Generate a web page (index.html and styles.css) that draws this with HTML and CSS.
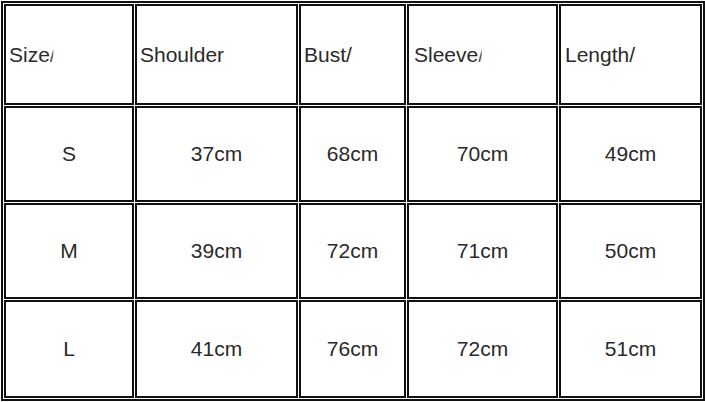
FILE: index.html
```html
<!DOCTYPE html>
<html>
<head>
<meta charset="utf-8">
<link rel="stylesheet" href="styles.css">
</head>
<body>
<div class="chart">
  <div class="cell head">Size<span class="cut">/</span></div>
  <div class="cell head">Shoulder</div>
  <div class="cell head">Bust/</div>
  <div class="cell head pad2">Sleeve<span class="cut">/</span></div>
  <div class="cell head pad1">Length/</div>

  <div class="cell">S</div>
  <div class="cell">37cm</div>
  <div class="cell">68cm</div>
  <div class="cell">70cm</div>
  <div class="cell">49cm</div>

  <div class="cell">M</div>
  <div class="cell">39cm</div>
  <div class="cell">72cm</div>
  <div class="cell">71cm</div>
  <div class="cell">50cm</div>

  <div class="cell">L</div>
  <div class="cell">41cm</div>
  <div class="cell">76cm</div>
  <div class="cell">72cm</div>
  <div class="cell">51cm</div>
</div>
</body>
</html>
```
FILE: styles.css
```css
html, body {
  margin: 0;
  padding: 0;
  background: #ffffff;
}

body {
  padding: 1px 0 0 1px;
  font-family: "Liberation Sans", Arial, sans-serif;
}

.chart {
  display: grid;
  grid-template-columns: 130px 163px 107px 151px 143px;
  grid-template-rows: 101px 96px 96px 98px;
  gap: 1px;
  padding: 1px;
  border: 2px solid #111;
  width: max-content;
}

.cell {
  border: 2px solid #111;
  display: flex;
  align-items: center;
  justify-content: center;
  font-size: 21px;
  color: #2a2a2a;
}

.cell.head {
  justify-content: flex-start;
  padding-left: 3px;
}

.cell.head.pad1 {
  padding-left: 4px;
}

.cell.head.pad2 {
  padding-left: 5px;
}

.cut {
  display: inline-block;
  clip-path: inset(30% 40% 0 0);
  color: #555;
}
```
